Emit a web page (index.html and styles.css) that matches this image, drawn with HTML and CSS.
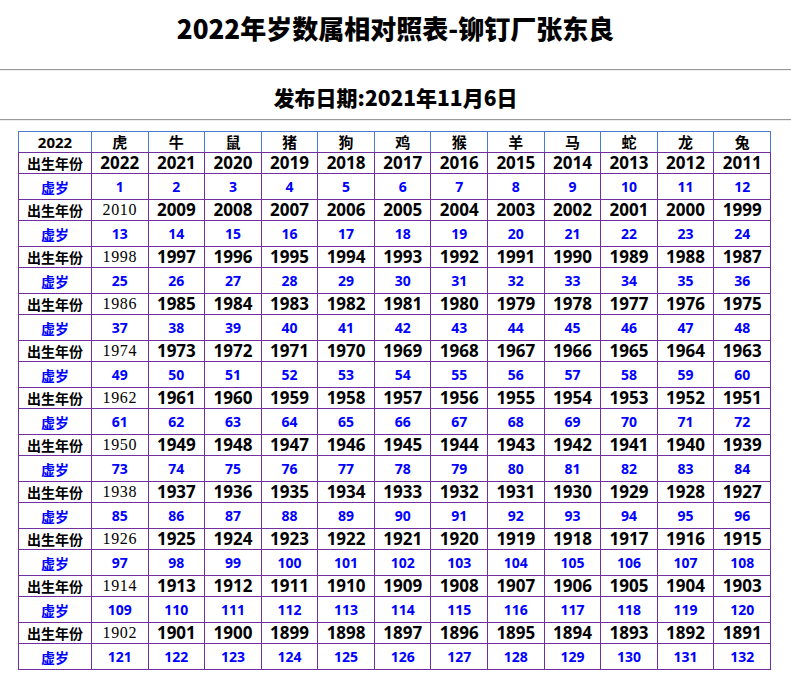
FILE: index.html
```html
<!DOCTYPE html>
<html lang="zh-CN">
<head>
<meta charset="utf-8">
<title>2022年岁数属相对照表</title>
<link rel="stylesheet" href="styles.css">
</head>
<body>
<div class="title">2022年岁数属相对照表-铆钉厂张东良</div>
<hr class="rule">
<div class="subtitle">发布日期:2021年11月6日</div>
<hr class="rule">
<table class="chart">
<colgroup><col class="c-label"><col span="12"></colgroup>
<tr class="head"><td>2022</td><td>虎</td><td>牛</td><td>鼠</td><td>猪</td><td>狗</td><td>鸡</td><td>猴</td><td>羊</td><td>马</td><td>蛇</td><td>龙</td><td>兔</td></tr>
<tr class="yr"><th>出生年份</th><td>2022</td><td>2021</td><td>2020</td><td>2019</td><td>2018</td><td>2017</td><td>2016</td><td>2015</td><td>2014</td><td>2013</td><td>2012</td><td>2011</td></tr>
<tr class="age"><th>虚岁</th><td>1</td><td>2</td><td>3</td><td>4</td><td>5</td><td>6</td><td>7</td><td>8</td><td>9</td><td>10</td><td>11</td><td>12</td></tr>
<tr class="yr"><th>出生年份</th><td class="serif">2010</td><td>2009</td><td>2008</td><td>2007</td><td>2006</td><td>2005</td><td>2004</td><td>2003</td><td>2002</td><td>2001</td><td>2000</td><td>1999</td></tr>
<tr class="age"><th>虚岁</th><td>13</td><td>14</td><td>15</td><td>16</td><td>17</td><td>18</td><td>19</td><td>20</td><td>21</td><td>22</td><td>23</td><td>24</td></tr>
<tr class="yr"><th>出生年份</th><td class="serif">1998</td><td>1997</td><td>1996</td><td>1995</td><td>1994</td><td>1993</td><td>1992</td><td>1991</td><td>1990</td><td>1989</td><td>1988</td><td>1987</td></tr>
<tr class="age"><th>虚岁</th><td>25</td><td>26</td><td>27</td><td>28</td><td>29</td><td>30</td><td>31</td><td>32</td><td>33</td><td>34</td><td>35</td><td>36</td></tr>
<tr class="yr"><th>出生年份</th><td class="serif">1986</td><td>1985</td><td>1984</td><td>1983</td><td>1982</td><td>1981</td><td>1980</td><td>1979</td><td>1978</td><td>1977</td><td>1976</td><td>1975</td></tr>
<tr class="age"><th>虚岁</th><td>37</td><td>38</td><td>39</td><td>40</td><td>41</td><td>42</td><td>43</td><td>44</td><td>45</td><td>46</td><td>47</td><td>48</td></tr>
<tr class="yr"><th>出生年份</th><td class="serif">1974</td><td>1973</td><td>1972</td><td>1971</td><td>1970</td><td>1969</td><td>1968</td><td>1967</td><td>1966</td><td>1965</td><td>1964</td><td>1963</td></tr>
<tr class="age"><th>虚岁</th><td>49</td><td>50</td><td>51</td><td>52</td><td>53</td><td>54</td><td>55</td><td>56</td><td>57</td><td>58</td><td>59</td><td>60</td></tr>
<tr class="yr"><th>出生年份</th><td class="serif">1962</td><td>1961</td><td>1960</td><td>1959</td><td>1958</td><td>1957</td><td>1956</td><td>1955</td><td>1954</td><td>1953</td><td>1952</td><td>1951</td></tr>
<tr class="age"><th>虚岁</th><td>61</td><td>62</td><td>63</td><td>64</td><td>65</td><td>66</td><td>67</td><td>68</td><td>69</td><td>70</td><td>71</td><td>72</td></tr>
<tr class="yr"><th>出生年份</th><td class="serif">1950</td><td>1949</td><td>1948</td><td>1947</td><td>1946</td><td>1945</td><td>1944</td><td>1943</td><td>1942</td><td>1941</td><td>1940</td><td>1939</td></tr>
<tr class="age"><th>虚岁</th><td>73</td><td>74</td><td>75</td><td>76</td><td>77</td><td>78</td><td>79</td><td>80</td><td>81</td><td>82</td><td>83</td><td>84</td></tr>
<tr class="yr"><th>出生年份</th><td class="serif">1938</td><td>1937</td><td>1936</td><td>1935</td><td>1934</td><td>1933</td><td>1932</td><td>1931</td><td>1930</td><td>1929</td><td>1928</td><td>1927</td></tr>
<tr class="age"><th>虚岁</th><td>85</td><td>86</td><td>87</td><td>88</td><td>89</td><td>90</td><td>91</td><td>92</td><td>93</td><td>94</td><td>95</td><td>96</td></tr>
<tr class="yr"><th>出生年份</th><td class="serif">1926</td><td>1925</td><td>1924</td><td>1923</td><td>1922</td><td>1921</td><td>1920</td><td>1919</td><td>1918</td><td>1917</td><td>1916</td><td>1915</td></tr>
<tr class="age"><th>虚岁</th><td>97</td><td>98</td><td>99</td><td>100</td><td>101</td><td>102</td><td>103</td><td>104</td><td>105</td><td>106</td><td>107</td><td>108</td></tr>
<tr class="yr"><th>出生年份</th><td class="serif">1914</td><td>1913</td><td>1912</td><td>1911</td><td>1910</td><td>1909</td><td>1908</td><td>1907</td><td>1906</td><td>1905</td><td>1904</td><td>1903</td></tr>
<tr class="age"><th>虚岁</th><td>109</td><td>110</td><td>111</td><td>112</td><td>113</td><td>114</td><td>115</td><td>116</td><td>117</td><td>118</td><td>119</td><td>120</td></tr>
<tr class="yr"><th>出生年份</th><td class="serif">1902</td><td>1901</td><td>1900</td><td>1899</td><td>1898</td><td>1897</td><td>1896</td><td>1895</td><td>1894</td><td>1893</td><td>1892</td><td>1891</td></tr>
<tr class="age"><th>虚岁</th><td>121</td><td>122</td><td>123</td><td>124</td><td>125</td><td>126</td><td>127</td><td>128</td><td>129</td><td>130</td><td>131</td><td>132</td></tr>
</table>
</body>
</html>
```

FILE: styles.css
```css
html, body {
  margin: 0;
  padding: 0;
  background: #ffffff;
  color: #000000;
  font-family: "Noto Sans", "Noto Sans CJK SC", sans-serif;
}

.title {
  box-sizing: border-box;
  height: 69px;
  padding-top: 13px;
  line-height: 30px;
  font-size: 26px;
  font-weight: 900;
  text-align: center;
  font-family: "Noto Sans CJK SC", sans-serif;
}

.subtitle {
  box-sizing: border-box;
  height: 48px;
  padding-top: 13px;
  line-height: 26px;
  font-size: 21px;
  font-weight: 900;
  text-align: center;
  font-family: "Noto Sans CJK SC", sans-serif;
}

.rule {
  margin: 0;
  height: 0;
  border: 0;
  border-top: 1px solid #9a9a9a;
  border-bottom: 1px solid #eeeeee;
}

.chart {
  margin: 10px 0 0 18px;
  width: 753px;
  table-layout: fixed;
  border-collapse: collapse;
}

.c-label {
  width: 73px;
}

.chart td,
.chart th {
  border: 1px solid #7030a0;
  padding: 0;
  text-align: center;
  vertical-align: middle;
  font-weight: bold;
  white-space: nowrap;
}

.chart .head td {
  border-color: #4a7bd0;
  border-bottom-color: #7030a0;
  height: 20px;
  font-size: 15px;
  line-height: 18px;
  font-family: "Noto Sans", "Noto Sans CJK SC", sans-serif;
}

.chart th {
  font-size: 14px;
  font-family: "Noto Sans CJK SC", sans-serif;
}

.yr td,
.yr th {
  height: 20px;
  line-height: 18px;
}

.yr td {
  font-size: 17px;
  color: #000000;
}

.yr td.serif {
  font-family: "Liberation Serif", serif;
  font-weight: normal;
  font-size: 16px;
  letter-spacing: 0.6px;
}

.age td,
.age th {
  height: 25px;
  line-height: 18px;
  color: #0000ff;
}

.age td {
  font-size: 14px;
}
```
